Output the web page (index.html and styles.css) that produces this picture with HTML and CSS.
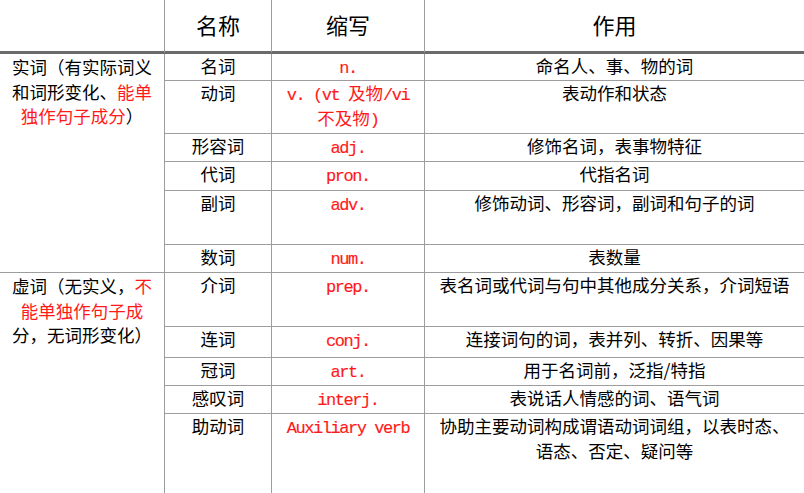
FILE: index.html
```html
<!DOCTYPE html>
<html lang="zh-CN">
<head>
<meta charset="utf-8">
<title>词类</title>
<link rel="stylesheet" href="styles.css">
</head>
<body>
<table class="grammar">
  <colgroup>
    <col class="col-cat">
    <col class="col-name">
    <col class="col-abbr">
    <col class="col-use">
  </colgroup>
  <thead>
    <tr class="row-head">
      <th class="cat"></th>
      <th>名称</th>
      <th>缩写</th>
      <th class="last">作用</th>
    </tr>
  </thead>
  <tbody>
    <tr class="h27">
      <td class="cat" rowspan="6">实词（有实际词义和词形变化、<span class="red">能单</span><span class="red">独作句子成分</span>）</td>
      <td>名词</td>
      <td class="abbr"><span class="mono">n.</span></td>
      <td class="last">命名人、事、物的词</td>
    </tr>
    <tr class="h53">
      <td>动词</td>
      <td class="abbr"><span class="mono">v. (vt </span>及物<span class="mono">/vi</span><br>不及物<span class="mono">)</span></td>
      <td class="last">表动作和状态</td>
    </tr>
    <tr class="h28">
      <td>形容词</td>
      <td class="abbr"><span class="mono">adj.</span></td>
      <td class="last">修饰名词，表事物特征</td>
    </tr>
    <tr class="h29">
      <td>代词</td>
      <td class="abbr"><span class="mono">pron.</span></td>
      <td class="last">代指名词</td>
    </tr>
    <tr class="h54">
      <td>副词</td>
      <td class="abbr"><span class="mono">adv.</span></td>
      <td class="last">修饰动词、形容词，副词和句子的词</td>
    </tr>
    <tr class="h28">
      <td>数词</td>
      <td class="abbr"><span class="mono">num.</span></td>
      <td class="last">表数量</td>
    </tr>
    <tr class="h54">
      <td class="cat end" rowspan="5">虚词（无实义，<span class="red">不</span><span class="red">能单独作句子成</span>分，无词形变化）</td>
      <td>介词</td>
      <td class="abbr"><span class="mono">prep.</span></td>
      <td class="last">表名词或代词与句中其他成分关系，介词短语</td>
    </tr>
    <tr class="h31">
      <td>连词</td>
      <td class="abbr"><span class="mono">conj.</span></td>
      <td class="last">连接词句的词，表并列、转折、因果等</td>
    </tr>
    <tr class="h28">
      <td>冠词</td>
      <td class="abbr"><span class="mono">art.</span></td>
      <td class="last">用于名词前，泛指/特指</td>
    </tr>
    <tr class="h28">
      <td>感叹词</td>
      <td class="abbr"><span class="mono">interj.</span></td>
      <td class="last">表说话人情感的词、语气词</td>
    </tr>
    <tr class="h79 final">
      <td>助动词</td>
      <td class="abbr"><span class="mono">Auxiliary verb</span></td>
      <td class="last">协助主要动词构成谓语动词词组，以表时态、语态、否定、疑问等</td>
    </tr>
  </tbody>
</table>
</body>
</html>
```

FILE: styles.css
```css
html, body {
  margin: 0;
  padding: 0;
  background: #ffffff;
  overflow: hidden;
}

.grammar {
  width: 804px;
  table-layout: fixed;
  border-collapse: separate;
  border-spacing: 0;
  font-family: "Noto Sans CJK SC", "Noto Sans", sans-serif;
  font-size: 17.5px;
  line-height: 24.5px;
  color: #000000;
}

.col-cat { width: 165px; }
.col-name { width: 107px; }
.col-abbr { width: 153px; }
.col-use { width: 379px; }

.grammar th,
.grammar td {
  padding: 0 8px;
  text-align: center;
  vertical-align: top;
  border-right: 1px solid #9d9d9d;
  border-bottom: 1px solid #9d9d9d;
  overflow: hidden;
}

.grammar th {
  font-weight: normal;
  font-size: 22px;
  vertical-align: middle;
  border-bottom: 3px solid #6a6a6a;
  padding-bottom: 2px;
}

.grammar .last {
  border-right: none;
}

.grammar .cat {
  padding: 1px 8px 0;
}

.grammar .cat.end {
  border-bottom: none;
}

.final td {
  border-bottom: none;
}

.row-head { height: 54px; }
.h27 { height: 27px; }
.h28 { height: 28px; }
.h29 { height: 29px; }
.h31 { height: 31px; }
.h53 { height: 53px; }
.h54 { height: 54px; }
.h79 { height: 79px; }

.red,
.abbr {
  color: #ff1a1a;
}

.mono {
  font-family: "Liberation Mono", monospace;
  font-size: 17px;
  letter-spacing: -1.45px;
  line-height: 1;
  -webkit-text-stroke: 0.15px #ff1a1a;
}
```
